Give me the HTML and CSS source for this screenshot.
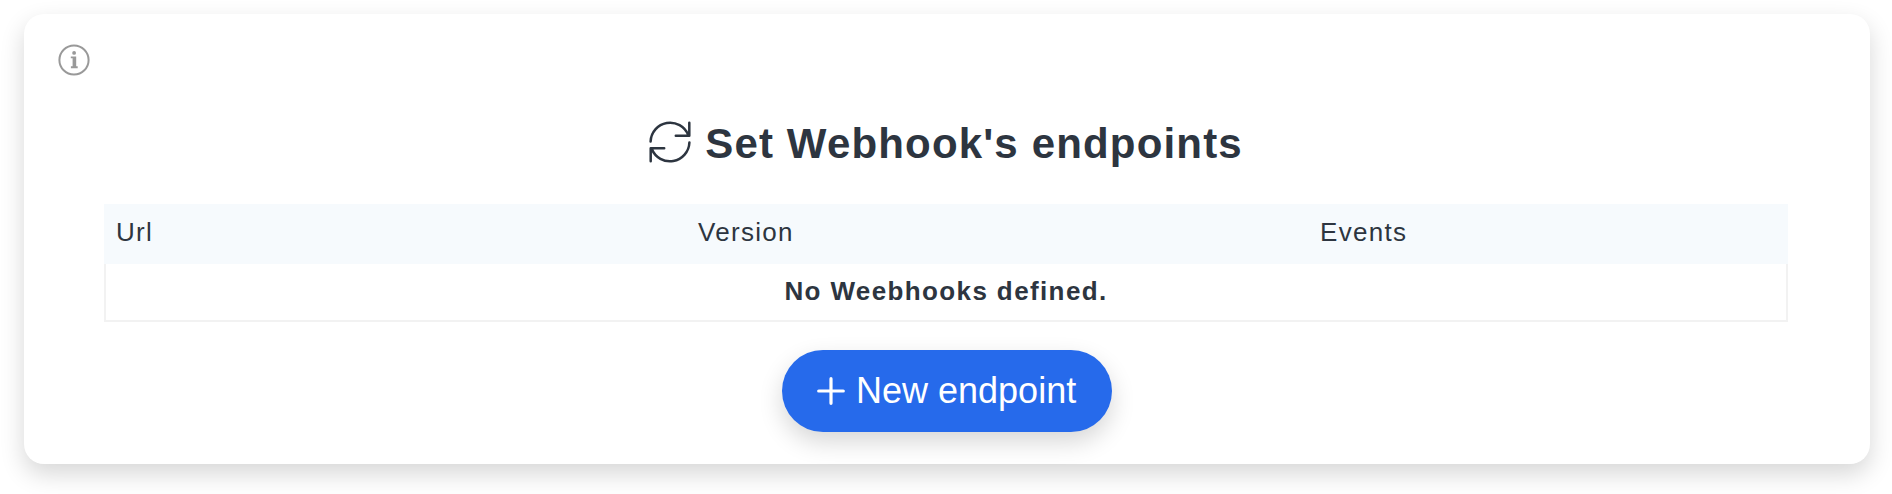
FILE: index.html
```html
<!DOCTYPE html>
<html lang="en">
<head>
<meta charset="utf-8">
<title>Webhooks</title>
<link rel="stylesheet" href="styles.css">
</head>
<body>
<main class="card">
  <div class="info">
    <svg class="info-icon" viewBox="0 0 32 32" fill="none">
      <circle cx="16" cy="16" r="14.6" stroke="#999" stroke-width="2"/>
      <circle cx="16.1" cy="8.9" r="1.9" fill="#999"/>
      <path d="M12.8 12.4h5.4v9.9h1.5v1.9h-6.8v-1.9h1.7v-8h-1.8z" fill="#999"/>
    </svg>
  </div>
  <h1 class="title">
    <svg class="title-icon" viewBox="0 0 42 42" fill="none" stroke="#2d3540" stroke-width="2.5" stroke-linecap="round" stroke-linejoin="round">
      <path d="M1.6 20.5A19.5 19.5 0 0 1 39.2 14M40.3 1.8v13H26.8"/>
      <path d="M40.4 21.5A19.5 19.5 0 0 1 2.8 28M1.7 40.2v-13h13.5"/>
    </svg>
    <span class="title-text">Set Webhook's endpoints</span>
  </h1>
  <table class="endpoints">
    <thead>
      <tr><th class="col-url">Url</th><th class="col-version">Version</th><th>Events</th></tr>
    </thead>
    <tbody>
      <tr><td colspan="3">No Weebhooks defined.</td></tr>
    </tbody>
  </table>
  <button class="new-button" type="button">
    <svg class="plus-icon" viewBox="0 0 28 28" stroke="#fff" stroke-width="3.2" stroke-linecap="round"><path d="M14 1.7v24.6M1.7 14h24.6"/></svg>
    <span>New endpoint</span>
  </button>
</main>
</body>
</html>
```
FILE: styles.css
```css
* { box-sizing: border-box; }
body {
  margin: 0;
  height: 494px;
  padding: 14px 22px 30px 24px;
  overflow: hidden;
  background: #fff;
  color: #2d3540;
  font-family: "Liberation Sans", Arial, sans-serif;
}
.card {
  display: flex;
  flex-direction: column;
  align-items: center;
  height: 450px;
  padding: 0 82px 0 80px;
  border-radius: 20px;
  background: #fff;
  box-shadow: 0 10px 24px rgba(0, 0, 0, .16);
}
.info {
  align-self: flex-start;
  height: 100px;
  margin-left: -46px;
  padding-top: 30px;
}
.info-icon { display: block; width: 32px; height: 32px; }
.title {
  display: flex;
  align-items: center;
  gap: 14px;
  height: 56px;
  margin: 0 0 34px;
  font-size: 42px;
  line-height: 56px;
  letter-spacing: 1.16px;
  white-space: nowrap;
}
.title-icon { width: 42px; height: 42px; overflow: visible; }
.title-text { padding-top: 3px; }
.endpoints {
  width: 1684px;
  table-layout: fixed;
  border-spacing: 0;
  font-size: 26px;
  line-height: 30px;
  letter-spacing: 1.3px;
}
.endpoints th {
  height: 60px;
  padding: 0 12px 4px;
  background: #f6fafd;
  font-weight: 400;
  text-align: left;
}
.col-url { width: 582px; }
.col-version { width: 622px; }
.endpoints td {
  height: 58px;
  padding: 0 0 3px;
  border: solid #f2f2f2;
  border-width: 0 2px 2px;
  font-weight: 700;
  letter-spacing: 1.38px;
  text-align: center;
}
.new-button {
  display: flex;
  align-items: center;
  gap: 11px;
  width: 330px;
  height: 82px;
  margin: 28px 0 0 2px;
  padding: 0 35px;
  border: 0;
  border-radius: 41px;
  background: #266aeb;
  box-shadow: 0 10px 24px rgba(0, 0, 0, .16);
  color: #fff;
  font: 36px/42px "Liberation Sans", Arial, sans-serif;
  white-space: nowrap;
}
.plus-icon { width: 28px; height: 28px; }
```
